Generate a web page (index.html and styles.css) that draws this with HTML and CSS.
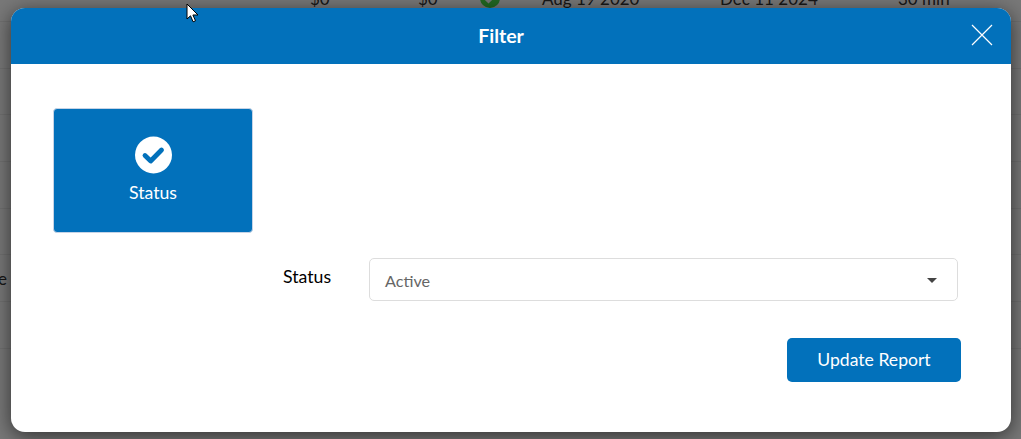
FILE: index.html
```html
<!DOCTYPE html>
<html lang="en">
<head>
<meta charset="utf-8">
<title>Filter</title>
<link rel="stylesheet" href="styles.css">
</head>
<body>
<div class="page">
  <div class="row row-top">
    <span class="cell c-a">$0</span>
    <span class="cell c-b">$0</span>
    <svg class="cell c-ok" width="20" height="20" viewBox="0 0 20 20"><circle cx="10" cy="10" r="10" fill="#48e048"/><path d="M5 10l3.5 3.5L15 7" fill="none" stroke="#fff" stroke-width="3"/></svg>
    <span class="cell c-c">Aug 19 2020</span>
    <span class="cell c-d">Dec 11 2024</span>
    <span class="cell c-e">30 min</span>
  </div>
  <div class="row"></div>
  <div class="row"></div>
  <div class="row"></div>
  <div class="row"></div>
  <div class="row"></div>
  <div class="row row-e"><span class="edge">e</span></div>
  <div class="row"></div>
</div>
<div class="backdrop"></div>
<div class="modal">
  <header class="modal-head">
    <h1 class="modal-title">Filter</h1>
    <svg class="close" width="22" height="22" viewBox="0 0 22 22"><path d="M1 1l20 20M21 1L1 21" stroke="#fff" stroke-width="1.2" fill="none"/></svg>
  </header>
  <div class="modal-body">
    <div class="tile">
      <svg class="tile-icon" width="38" height="38" viewBox="0 0 38 38"><circle cx="19.5" cy="19" r="18.5" fill="#fff"/><path d="M11 19.5l5.7 5.5L27.5 14" fill="none" stroke="#0271bb" stroke-width="4.8" stroke-linecap="round" stroke-linejoin="round"/></svg>
      <span class="tile-label">Status</span>
    </div>
    <div class="field">
      <label class="field-label">Status</label>
      <div class="select"><span>Active</span><i class="caret"></i></div>
    </div>
    <div class="actions"><button class="btn">Update Report</button></div>
  </div>
</div>
<svg class="cursor" width="14" height="20" viewBox="0 0 14 20"><path d="M1 1v15l3.5-3.2 2.6 6 2.4-1-2.6-5.8H12z" fill="#fff" stroke="#000" stroke-width="1"/></svg>
</body>
</html>
```
FILE: styles.css
```css
* { box-sizing: border-box; }
html, body { margin: 0; height: 100%; }
body { width: 1021px; height: 439px; overflow: hidden; background: #fff; font-family: Lato, "Open Sans", sans-serif; color: #333; position: relative; }
.page { height: 439px; overflow: hidden; }
.row { display: flex; align-items: center; height: 46.7px; border-bottom: 1px solid #eee; font-size: 17px; }
.row-top { margin-top: -24.7px; }
.cell { flex: none; }
.c-a { margin-left: 310px; width: 108px; }
.c-b { width: 62px; }
.c-ok { width: 20px; margin-right: 42px; }
.c-c { width: 178px; }
.c-d { width: 178px; }
.row-e { overflow: hidden; }
.edge { margin-left: -2px; }
.backdrop { position: absolute; inset: 0; background: rgba(0,0,0,.53); }
.modal { position: absolute; left: 11px; top: 8px; width: 1000px; height: 424px; background: #fff; border-radius: 14px; overflow: hidden; box-shadow: 0 4px 20px rgba(0,0,0,.6); }
.modal-head { height: 56px; background: #0271bb; display: flex; align-items: center; justify-content: center; padding: 0 20px 2px 0; position: relative; }
.modal-title { margin: 0; font-size: 19.5px; font-weight: 700; color: #fff; }
.close { position: absolute; right: 18px; top: 16px; }
.modal-body { padding: 44px 50px 0 42px; }
.tile { width: 200px; height: 125px; background: #0271bb; border: 1px solid #c5d3e6; border-radius: 4px; display: flex; flex-direction: column; align-items: center; padding-top: 27px; color: #fff; }
.tile-label { font-size: 17.7px; margin-top: 8px; line-height: 22px; }
.field { display: flex; margin-top: 25px; }
.field-label { margin-left: 230px; width: 86px; font-size: 17.7px; color: #000; line-height: 38px; }
.select { width: 589px; height: 43px; border: 1px solid #ddd; border-radius: 5px; display: flex; align-items: center; justify-content: space-between; padding: 2px 20px 0 15px; font-size: 16.2px; color: #666; }
.caret { width: 0; height: 0; border-left: 5px solid transparent; border-right: 5px solid transparent; border-top: 5px solid #444; }
.actions { display: flex; justify-content: flex-end; margin-top: 37px; }
.btn { width: 174px; height: 44px; border: 0; border-radius: 5px; background: #0271bb; color: #fff; font: 400 17.6px Lato, sans-serif; padding: 0 0 2px; }
.cursor { position: absolute; left: 186px; top: 3px; }
```
